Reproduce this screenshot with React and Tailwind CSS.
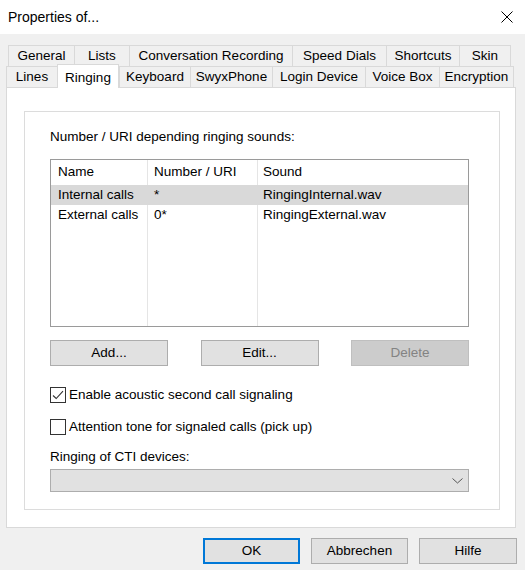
import React from "react";

const font = { fontFamily: '"Liberation Sans", Arial, sans-serif' };

const backTabs = [
  ["General", 66],
  ["Lists", 55],
  ["Conversation Recording", 163],
  ["Speed Dials", 94],
  ["Shortcuts", 73],
  ["Skin", 52],
];

const frontTabs = [
  ["Lines", 51],
  ["Ringing", 62],
  ["Keyboard", 71],
  ["SwyxPhone", 82],
  ["Login Device", 93],
  ["Voice Box", 74],
  ["Encryption", 74],
];

const rows = [
  { name: "Internal calls", number: "*", sound: "RingingInternal.wav", selected: true },
  { name: "External calls", number: "0*", sound: "RingingExternal.wav" },
];

function Tab({ label, width, active }) {
  if (active) {
    return (
      <div
        className="relative z-10 -mt-[2px] -mb-px flex h-[24px] items-start justify-center border border-b-0 border-[#d9d9d9] bg-white pt-[3px]"
        style={{ width }}
      >
        {label}
      </div>
    );
  }
  return (
    <div
      className="flex h-[21px] items-center justify-center border-l border-t border-[#d9d9d9] last:border-r"
      style={{ width }}
    >
      {label}
    </div>
  );
}

function Button({ children, disabled, width = "w-[118px]", height = "h-[26px]" }) {
  return (
    <button
      className={
        width +
        " " +
        height +
        (disabled
          ? " border border-[#bfbfbf] bg-[#cccccc] text-[#838383]"
          : " border border-[#adadad] bg-[#e1e1e1] text-black")
      }
    >
      {children}
    </button>
  );
}

function Checkbox({ checked, label }) {
  return (
    <div className="flex h-[18px] items-center">
      <div className="flex h-[16px] w-[16px] items-center justify-center border border-[#333333] bg-white">
        {checked && (
          <svg width="12" height="10" viewBox="0 0 12 10">
            <path d="M1 5.5 L4.2 8.5 L11 1.2" fill="none" stroke="#333333" strokeWidth="1.1" />
          </svg>
        )}
      </div>
      <span className="ml-[3px]">{label}</span>
    </div>
  );
}

export default function App() {
  return (
    <div className="flex h-[570px] w-[525px] flex-col bg-[#f0f0f0] text-[13.5px] text-black" style={font}>
      {/* title bar */}
      <div className="flex h-[34px] items-center justify-between bg-white pl-[8px] pr-[12px]">
        <span className="text-[14px]">Properties of...</span>
        <svg width="12" height="12" viewBox="0 0 12 12">
          <path d="M0.5 0.5 L11.5 11.5 M11.5 0.5 L0.5 11.5" stroke="#000" strokeWidth="1" />
        </svg>
      </div>

      {/* tabs */}
      <div className="mt-[11px] flex pl-[8px]">
        {backTabs.map(([label, w]) => (
          <Tab key={label} label={label} width={w} />
        ))}
      </div>
      <div className="flex items-end pl-[6px]">
        {frontTabs.map(([label, w], i) => (
          <div
            key={label}
            className={
              "flex" +
              (label === "Ringing" ? "" : " h-[21px] border-t border-l border-[#d9d9d9]") +
              (i === frontTabs.length - 1 ? " border-r" : "")
            }
          >
            {label === "Ringing" ? (
              <Tab label={label} width={w} active />
            ) : (
              <div className="flex items-center justify-center" style={{ width: w - 1 }}>
                {label}
              </div>
            )}
          </div>
        ))}
      </div>

      {/* tab page */}
      <div className="ml-[6px] h-[441px] w-[510px] border border-[#d9d9d9] bg-white pl-[17px] pt-[23px]">
        <div className="h-[399px] w-[476px] border border-[#dcdcdc] pl-[25px] pt-[16px]">
          <div className="h-[18px] leading-[18px]">Number / URI depending ringing sounds:</div>

          {/* list view */}
          <div className="relative mt-[13px] h-[168px] w-[419px] border border-[#9a9a9a] bg-white">
            <div className="absolute bottom-0 left-[96px] top-0 border-l border-[#e5e5e5]" />
            <div className="absolute bottom-0 left-[206px] top-0 border-l border-[#e5e5e5]" />
            <div className="flex h-[25px] items-center">
              <div className="w-[96px] pl-[7px]">Name</div>
              <div className="w-[110px] pl-[7px]">Number / URI</div>
              <div className="pl-[6px]">Sound</div>
            </div>
            {rows.map((r) => (
              <div
                key={r.name}
                className={"relative flex h-[20px] items-center" + (r.selected ? " bg-[#d9d9d9]" : "")}
              >
                <div className="w-[96px] pl-[7px]">{r.name}</div>
                <div className="w-[110px] pl-[7px]">{r.number}</div>
                <div className="pl-[6px]">{r.sound}</div>
              </div>
            ))}
          </div>

          <div className="mt-[13px] flex w-[419px] justify-between">
            <Button>Add...</Button>
            <Button>Edit...</Button>
            <Button disabled>Delete</Button>
          </div>

          <div className="mt-[20px]">
            <Checkbox checked label="Enable acoustic second call signaling" />
          </div>
          <div className="mt-[14px]">
            <Checkbox label="Attention tone for signaled calls (pick up)" />
          </div>

          <div className="mt-[12px] h-[18px] leading-[18px]">Ringing of CTI devices:</div>
          <div className="mt-[3px] flex h-[23px] w-[419px] items-center justify-end border border-[#adadad] bg-[#e1e1e1] pr-[5px]">
            <svg width="11" height="6" viewBox="0 0 11 6">
              <path d="M0.5 0.5 L5.5 5 L10.5 0.5" fill="none" stroke="#555" strokeWidth="1" />
            </svg>
          </div>
        </div>
      </div>

      {/* dialog buttons */}
      <div className="mt-[10px] flex justify-end gap-[11px] pr-[8px]">
        <button className="h-[26px] w-[97px] border-2 border-[#0078d7] bg-[#e1e1e1]">OK</button>
        <Button width="w-[97px]">Abbrechen</Button>
        <Button width="w-[98px]">Hilfe</Button>
      </div>
    </div>
  );
}
